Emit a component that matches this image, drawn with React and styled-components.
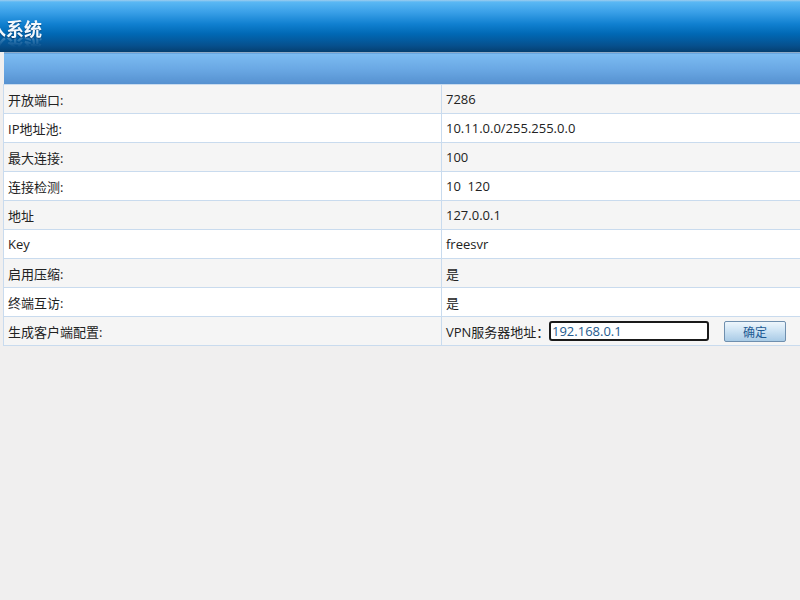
import React from "react";
import styled, { createGlobalStyle } from "styled-components";

const GlobalStyle = createGlobalStyle`
  html, body {
    margin: 0;
    padding: 0;
    background: #f0efef;
    overflow: hidden;
  }
  body {
    font-family: "Open Sans", "Noto Sans CJK SC", sans-serif;
    font-size: 13px;
    color: #222;
  }
`;

const Header = styled.div`
  height: 52px;
  overflow: hidden;
  background: linear-gradient(
    to bottom,
    #9fcdee 0px,
    #5ab8f4 2px,
    #3aa0e8 12px,
    #1080d0 24px,
    #0068b4 34px,
    #064f8c 46px,
    #053f70 52px
  );
`;

const Title = styled.div`
  margin: 16px 0 0 -12px;
  font-family: "Noto Sans CJK SC", sans-serif;
  font-weight: 700;
  font-size: 18px;
  line-height: 24px;
  color: #f4f8fc;
  white-space: nowrap;
  text-shadow: 0 1px 1px rgba(0, 30, 70, 0.6);
  -webkit-box-reflect: below -6px
    linear-gradient(transparent 45%, rgba(255, 255, 255, 0.35));
`;

const Content = styled.div`
  padding-left: 3px;
`;

const Table = styled.table`
  width: calc(100% + 4px);
  border-collapse: collapse;
  table-layout: fixed;
`;

const HeadCell = styled.th`
  height: 31px;
  padding: 0;
  border-top: 1px solid #8eaac6;
  background: linear-gradient(to bottom, #7cbcf2, #6aa8e4 50%, #5590cf);
`;

const Row = styled.tr`
  background: ${(p) => (p.$odd ? "#f5f5f5" : "#ffffff")};
`;

const Cell = styled.td`
  height: 28px;
  padding: 0 4px;
  border: 1px solid #c9dbee;
  vertical-align: middle;
  white-space: nowrap;
`;

const InlineForm = styled.div`
  display: flex;
  align-items: center;
`;

const Label = styled.span`
  width: 103px;
`;

const TextInput = styled.input`
  box-sizing: border-box;
  width: 160px;
  height: 20px;
  padding: 0 1px;
  border: 2px solid #1a1a1a;
  border-radius: 3px;
  background: #fff;
  font-family: "Open Sans", sans-serif;
  font-size: 13px;
  color: #245a8e;
  caret-color: #000;
  outline: none;
`;

const Button = styled.button`
  box-sizing: border-box;
  margin-left: 15px;
  width: 62px;
  height: 21px;
  padding: 0;
  border: 1px solid #6f8fae;
  border-radius: 2px;
  background: linear-gradient(to bottom, #eef6fc, #cfe4f4 45%, #a9cbe6);
  font-family: "Noto Sans CJK SC", sans-serif;
  font-size: 12px;
  color: #1e5a94;
  cursor: pointer;
`;

const rows = [
  ["开放端口:", "7286"],
  ["IP地址池:", "10.11.0.0/255.255.0.0"],
  ["最大连接:", "100"],
  ["连接检测:", "10\u00a0\u00a0120"],
  ["地址", "127.0.0.1"],
  ["Key", "freesvr"],
  ["启用压缩:", "是"],
  ["终端互访:", "是"],
];

export default function App() {
  return (
    <>
      <GlobalStyle />
      <Header>
        <Title>入系统</Title>
      </Header>
      <Content>
        <Table>
          <thead>
            <tr>
              <HeadCell style={{ width: 438 }} />
              <HeadCell />
            </tr>
          </thead>
          <tbody>
            {rows.map(([k, v], i) => (
              <Row key={k} $odd={i % 2 === 0}>
                <Cell>{k}</Cell>
                <Cell>{v}</Cell>
              </Row>
            ))}
            <Row $odd>
              <Cell>生成客户端配置:</Cell>
              <Cell>
                <InlineForm>
                  <Label>VPN服务器地址：</Label>
                  <TextInput defaultValue="192.168.0.1" />
                  <Button>确定</Button>
                </InlineForm>
              </Cell>
            </Row>
          </tbody>
        </Table>
      </Content>
    </>
  );
}
